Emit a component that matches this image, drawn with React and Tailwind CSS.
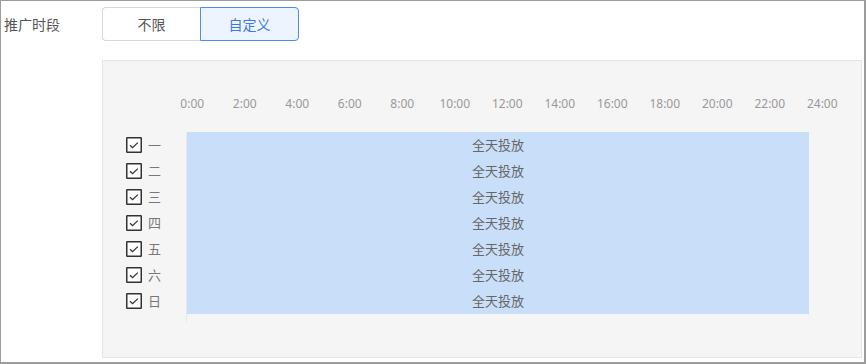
const hours = ['0:00', '2:00', '4:00', '6:00', '8:00', '10:00', '12:00', '14:00', '16:00', '18:00', '20:00', '22:00', '24:00']
const days = ['一', '二', '三', '四', '五', '六', '日']

const font = "font-['Noto_Sans','Noto_Sans_CJK_SC',sans-serif]"

function Check() {
  return (
    <svg width="16" height="16" viewBox="0 0 16 16" className="shrink-0">
      <rect x="0.75" y="0.75" width="14.5" height="14.5" rx="0.5" fill="#fff" stroke="#333" strokeWidth="1.5" />
      <path d="M4 8.2l2.6 2.5L11.8 5.6" fill="none" stroke="#333" strokeWidth="1.3" />
    </svg>
  )
}

export default function App() {
  return (
    <div className={`w-[866px] h-[364px] bg-white border-t border-l border-r-2 border-b-2 border-[#9c9c9c] ${font}`}>
      {/* Mode switch */}
      <div className="flex items-center mt-[6px] h-[34px]">
        <span className="w-[101px] pl-[3px] text-[14px] text-[#555]">推广时段</span>
        <div className="flex h-[34px]">
          <button className="w-[98px] h-full border border-[#d6d6d6] border-r-0 rounded-l-[4px] text-[14px] text-[#555] bg-white">
            不限
          </button>
          <button className="w-[99px] h-full border border-[#4a8bef] rounded-r-[4px] text-[14px] text-[#3b79de] bg-[#eef4fe]">
            自定义
          </button>
        </div>
      </div>

      {/* Schedule panel */}
      <div className="ml-[101px] mt-[19px] w-[760px] h-[298px] bg-[#f5f5f5] border border-[#e6e6e6] pt-[35px]">
        <div className="ml-[63px] grid grid-cols-13 w-[682.5px] h-[16px] text-[12px] leading-[16px] text-[#999]">
          {hours.map(h => (
            <span key={h} className="text-center">{h}</span>
          ))}
        </div>

        <div className="flex mt-[20px]">
          <div className="w-[83px] pl-[23px] flex flex-col">
            {days.map(d => (
              <div key={d} className="h-[26px] flex items-center gap-[6px]">
                <Check />
                <span className="text-[13px] text-[#777] pt-[1px]">{d}</span>
              </div>
            ))}
          </div>
          <div className="h-[190px] border-l border-[#e9e9e9]">
            <div className="w-[622px] bg-[#c9dff9] flex flex-col">
              {days.map(d => (
                <div key={d} className="h-[26px] pt-[2px] flex items-center justify-center text-[13px] text-[#666]">
                  全天投放
                </div>
              ))}
            </div>
          </div>
        </div>
      </div>
    </div>
  )
}
